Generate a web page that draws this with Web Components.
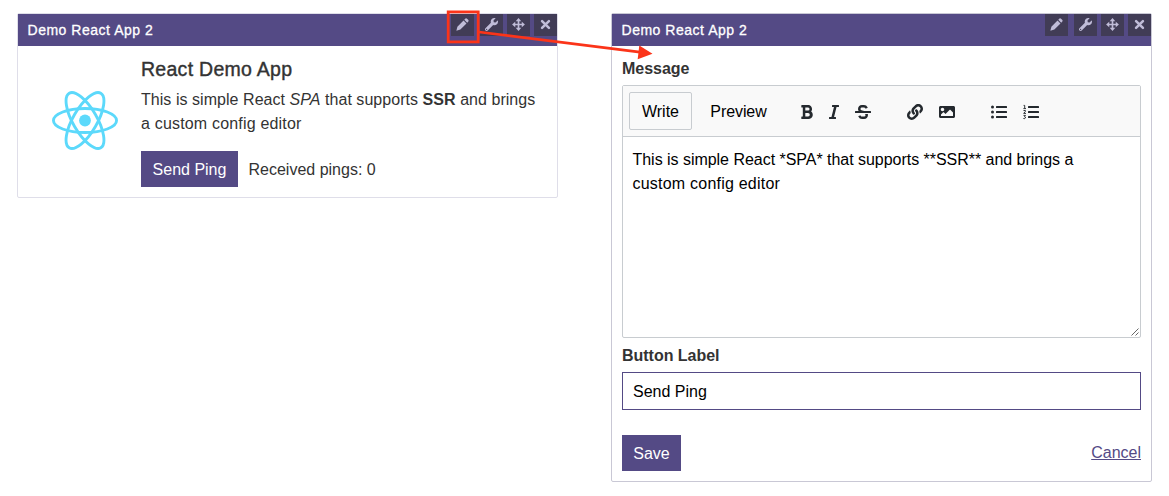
<!DOCTYPE html>
<html lang="en">
<head>
<meta charset="utf-8">
<title>Demo React App 2</title>
<style>
html,body{margin:0;background:#fff}
body{width:1169px;height:496px;overflow:hidden;font:16px/24px "Liberation Sans",Arial,sans-serif;color:#333}
</style>
</head>
<body>
<demo-page></demo-page>
<script>
const define = (name, html) => customElements.define(name, class extends HTMLElement {
  constructor() {
    super();
    this.attachShadow({mode: 'open'}).innerHTML = html;
  }
});

const ICONS = {
  pencil: ['0 0 14 14', '<path d="M.4 13.6 1.5 9.3 8.1 2.7 11.3 5.9 4.7 12.5ZM8.9 1.9 10.2.6Q11 0 11.9.7L13.3 2.1Q14 2.9 13.3 3.8L12.1 5.1Z"/>'],
  wrench: ['0 0 512 512', '<path d="M507.73 109.1c-2.24-9.03-13.54-12.09-20.12-5.51l-74.36 74.36-67.88-11.31-11.31-67.88 74.36-74.36c6.62-6.62 3.43-17.9-5.66-20.16-47.38-11.74-99.55.91-136.58 37.93-39.64 39.64-50.55 97.1-34.05 147.2L18.74 402.76c-24.99 24.99-24.99 65.51 0 90.5 24.99 24.99 65.51 24.99 90.5 0l213.21-213.21c50.12 16.71 107.47 5.68 147.37-34.22 37.07-37.07 49.7-89.32 37.91-136.73zM64 472c-13.25 0-24-10.75-24-24 0-13.26 10.75-24 24-24s24 10.74 24 24c0 13.25-10.75 24-24 24z"/>'],
  move: ['0 0 14 14', '<path d="M7 .1 10 3.5H7.9V6.1H10.5V4L13.9 7 10.5 10V7.9H7.9V10.5H10L7 13.9 4 10.5H6.1V7.9H3.5V10L.1 7 3.5 4V6.1H6.1V3.5H4Z"/>'],
  close: ['0 0 14 14', '<path d="M3.3 3.3 10.7 10.7M10.7 3.3 3.3 10.7" fill="none" stroke="currentColor" stroke-width="2.7" stroke-linecap="round"/>'],
  bold: ['16 0 368 512', '<path d="M333.49 238a122 122 0 0 0 27-65.21C367.87 96.49 308 32 233.42 32H34a16 16 0 0 0-16 16v48a16 16 0 0 0 16 16h31.87v288H34a16 16 0 0 0-16 16v48a16 16 0 0 0 16 16h209.32c70.8 0 134.14-51.75 141-122.4 4.74-48.45-16.39-92.06-50.83-119.6zM145.66 112h87.76a48 48 0 0 1 0 96h-87.76zm87.76 288h-87.76V288h87.76a56 56 0 0 1 0 112z"/>'],
  italic: ['0 0 320 512', '<path d="M320 48v32a16 16 0 0 1-16 16h-62.76l-80 320H208a16 16 0 0 1 16 16v32a16 16 0 0 1-16 16H16a16 16 0 0 1-16-16v-32a16 16 0 0 1 16-16h62.76l80-320H112a16 16 0 0 1-16-16V48a16 16 0 0 1 16-16h192a16 16 0 0 1 16 16z"/>'],
  strike: ['0 0 512 512', '<path d="M496 224H293.9l-87.17-26.83A43.55 43.55 0 0 1 219.55 112h66.79A49.89 49.89 0 0 1 331 139.58a16 16 0 0 0 21.46 7.15l42.94-21.47a16 16 0 0 0 7.16-21.46l-.53-1A128 128 0 0 0 287.51 32h-68a123.68 123.68 0 0 0-123 135.64c2 20.89 10.1 39.83 21.78 56.36H16a16 16 0 0 0-16 16v32a16 16 0 0 0 16 16h480a16 16 0 0 0 16-16v-32a16 16 0 0 0-16-16zm-180.24 96A43 43 0 0 1 336 356.45 43.59 43.59 0 0 1 292.45 400h-66.79A49.89 49.89 0 0 1 181 372.42a16 16 0 0 0-21.46-7.15l-42.94 21.47a16 16 0 0 0-7.16 21.46l.53 1A128 128 0 0 0 224.49 480h68a123.68 123.68 0 0 0 123-135.64 114.25 114.25 0 0 0-5.34-24.36z"/>'],
  link: ['0 0 512 512', '<path d="M326.612 185.391c59.747 59.809 58.927 155.698.36 214.59-.11.12-.24.25-.36.37l-67.2 67.2c-59.27 59.27-155.699 59.262-214.96 0-59.27-59.26-59.27-155.7 0-214.96l37.106-37.106c9.84-9.84 26.786-3.3 27.294 10.606.648 17.722 3.826 35.527 9.69 52.721 1.986 5.822.567 12.262-3.783 16.612l-13.087 13.087c-28.026 28.026-28.905 73.66-1.155 101.96 28.024 28.579 74.086 28.749 102.325.51l67.2-67.19c28.191-28.191 28.073-73.757 0-101.83-3.701-3.694-7.429-6.564-10.341-8.569a16.037 16.037 0 0 1-6.947-12.606c-.396-10.567 3.348-21.456 11.698-29.806l21.054-21.055c5.521-5.521 14.182-6.199 20.584-1.731a152.482 152.482 0 0 1 20.522 17.197zM467.547 44.449c-59.261-59.262-155.69-59.27-214.96 0l-67.2 67.2c-.12.12-.25.25-.36.37-58.566 58.892-59.387 154.781.36 214.59a152.454 152.454 0 0 0 20.521 17.196c6.402 4.468 15.064 3.789 20.584-1.731l21.054-21.055c8.35-8.35 12.094-19.239 11.698-29.806a16.037 16.037 0 0 0-6.947-12.606c-2.912-2.005-6.64-4.875-10.341-8.569-28.073-28.073-28.191-73.639 0-101.83l67.2-67.19c28.239-28.239 74.3-28.069 102.325.51 27.75 28.3 26.872 73.934-1.155 101.96l-13.087 13.087c-4.35 4.35-5.769 10.79-3.783 16.612 5.864 17.194 9.042 34.999 9.69 52.721.509 13.906 17.454 20.446 27.294 10.606l37.106-37.106c59.271-59.259 59.271-155.699.001-214.959z"/>'],
  image: ['0 0 512 512', '<path d="M464 448H48c-26.51 0-48-21.49-48-48V112c0-26.51 21.49-48 48-48h416c26.51 0 48 21.49 48 48v288c0 26.51-21.49 48-48 48zM112 120c-30.928 0-56 25.072-56 56s25.072 56 56 56 56-25.072 56-56-25.072-56-56-56zM64 384h384V272l-87.515-87.515c-4.686-4.686-12.284-4.686-16.971 0L208 320l-55.515-55.515c-4.686-4.686-12.284-4.686-16.971 0L64 336v48z"/>'],
  ul: ['0 0 16 16', '<circle cx="1.5" cy="3" r="1.5"/><circle cx="1.5" cy="8" r="1.5"/><circle cx="1.5" cy="13" r="1.5"/><rect x="5" y="2" width="11" height="2" rx=".5"/><rect x="5" y="7" width="11" height="2" rx=".5"/><rect x="5" y="12" width="11" height="2" rx=".5"/>'],
  ol: ['0 0 16 16', '<rect x="5" y="2" width="11" height="2" rx=".5"/><rect x="5" y="7" width="11" height="2" rx=".5"/><rect x="5" y="12" width="11" height="2" rx=".5"/><path d="M.6 1.4H1.7V4.4M.4 4.6H3M.5 6.5H2.4V7.4L.7 9.4H3M.5 11.4H2.5L1.5 12.7Q2.7 12.8 2.5 13.9Q2.2 14.9.4 14.5" fill="none" stroke="currentColor" stroke-width=".95"/>']
};

customElements.define('ui-icon', class extends HTMLElement {
  connectedCallback() {
    const [box, body] = ICONS[this.getAttribute('name')];
    const root = this.shadowRoot || this.attachShadow({mode: 'open'});
    root.innerHTML = `<style>:host{display:block;width:16px;height:16px;flex:none}svg{display:block;width:100%;height:100%;fill:currentColor}</style><svg viewBox="${box}">${body}</svg>`;
  }
});

define('window-tools', `
<style>
:host{display:flex;gap:4px;height:22px}
span{width:23px;height:22px;background:#413c56;color:#c0bcd8;display:flex;justify-content:center;box-sizing:border-box;padding-top:4px}
span:first-of-type{margin-right:2px}
ui-icon{width:13px;height:13px}
</style>
<span><ui-icon name="pencil"></ui-icon></span><span><ui-icon name="wrench"></ui-icon></span><span><ui-icon name="move"></ui-icon></span><span><ui-icon name="close"></ui-icon></span>`);

define('app-panel', `
<style>
:host{display:block;box-sizing:border-box;width:541px;border:1px solid var(--edge,#dfdee9);border-radius:2px;background:#fff}
header{height:32px;background:#544a85;color:#fff;display:flex;justify-content:space-between;font-size:14px;line-height:32px;padding-left:9.5px}
.t{letter-spacing:.52px;-webkit-text-stroke:.3px #fff}
</style>
<header><span class="t"><slot name="title"></slot></span><window-tools></window-tools></header><slot></slot>`);

define('ui-button', `
<style>:host{display:block;box-sizing:border-box;height:36px;line-height:37px;background:#544a85;color:#fff;text-align:center}</style><slot></slot>`);

define('react-logo', `
<style>:host{display:block;width:66px;height:59px}svg{display:block;width:100%;height:100%}</style>
<svg viewBox="-11.5 -10.23 23 20.46"><circle r="2.05" fill="#5cd9fb"/><g fill="none" stroke="#5cd9fb"><ellipse rx="11" ry="4.2"/><ellipse rx="11" ry="4.2" transform="rotate(60)"/><ellipse rx="11" ry="4.2" transform="rotate(120)"/></g></svg>`);

define('ping-card', `
<style>
:host{display:flex;height:151px;box-sizing:border-box}
react-logo{margin:45.3px 23.5px 0 33.5px;flex:none}
.b{padding-top:10px}
h2{margin:0;font-size:19.5px;font-weight:400;line-height:26px;letter-spacing:.28px;-webkit-text-stroke:.4px #333}
p{margin:6px 0 0;white-space:nowrap;letter-spacing:.045px}
.w{letter-spacing:.18px}
.r{display:flex;align-items:center;margin-top:15px;line-height:25px}
.r span{padding-top:1px}
ui-button{width:97px;margin-right:10.5px}
</style>
<react-logo></react-logo>
<div class="b"><h2>React Demo App</h2>
<p>This is simple React <em>SPA</em> that supports <strong>SSR</strong> and brings<br><span class="w">a custom config editor</span></p>
<div class="r"><ui-button>Send Ping</ui-button><span>Received pings: 0</span></div></div>`);

define('markdown-editor', `
<style>
:host{display:block;box-sizing:border-box;height:253px;border:1px solid #c8ccd0;border-radius:2px;color:#000;position:relative}
.bar{height:50px;background:#f9f9f9;border-bottom:1px solid #c8ccd0;display:flex;align-items:center;padding-left:6px}
.tab{box-sizing:border-box;height:38px;line-height:37px;width:63px;text-align:center;border:1px solid #c8ccd0;border-radius:2px}
.tab.off{border-color:transparent;width:81px;margin:0 22px 0 6px;letter-spacing:-.08px}
.g{display:flex;gap:16px;margin:1px 36px 0 0;color:#24292e}
.g ui-icon.n{width:12px}.g ui-icon.i{width:10px}
.text{padding:11px 9.5px;letter-spacing:-.03px}
svg{position:absolute;right:1px;bottom:1px}
</style>
<div class="bar"><div class="tab">Write</div><div class="tab off">Preview</div>
<div class="g"><ui-icon class="n" name="bold"></ui-icon><ui-icon class="i" name="italic"></ui-icon><ui-icon name="strike"></ui-icon></div>
<div class="g"><ui-icon name="link"></ui-icon><ui-icon name="image"></ui-icon></div>
<div class="g"><ui-icon name="ul"></ui-icon><ui-icon name="ol"></ui-icon></div></div>
<div class="text"><slot></slot></div>
<svg width="8" height="8" viewBox="0 0 8 8" stroke="#555" stroke-width=".9"><path d="M.5 7.5 7.5.5M4.5 7.5 7.5 4.5"/></svg>`);

define('config-form', `
<style>
:host{display:block;height:435px;box-sizing:border-box;padding:11px 10px 10px}
label{display:block;font-weight:700;line-height:24px;letter-spacing:-.02px}
markdown-editor{margin-top:4px}
.w{letter-spacing:.22px}
.l2{margin-top:6px}
.in{box-sizing:border-box;height:38px;border:1px solid #544a85;margin-top:4px;padding-left:10px;line-height:37px;color:#000}
footer{display:flex;justify-content:space-between;margin-top:25px}
ui-button{width:59px}
a{color:#544a85;text-decoration:underline;line-height:36px}
</style>
<label>Message</label>
<markdown-editor>This is simple React *SPA* that supports **SSR** and brings a<br><span class="w">custom config editor</span></markdown-editor>
<label class="l2">Button Label</label>
<div class="in">Send Ping</div>
<footer><ui-button>Save</ui-button><a>Cancel</a></footer>`);

define('callout-arrow', `
<style>:host{position:absolute;left:0;top:0;pointer-events:none}svg{display:block}</style>
<svg width="660" height="70" viewBox="0 0 660 70"><rect x="448.2" y="11.9" width="30" height="30" fill="none" stroke="#fb3419" stroke-width="2.8"/><path d="M479 32 640 52.2" stroke="#fb3419" stroke-width="2.7"/><path d="M639.3 45.5 652.5 53.8 637.7 59.2Z" fill="#fb3419"/></svg>`);

define('demo-page', `
<style>
:host{display:flex;align-items:flex-start;gap:53px;box-sizing:border-box;height:496px;padding:13px 17px;position:relative}
.e{--edge:#c9c8d5}
</style>
<app-panel><span slot="title">Demo React App 2</span><ping-card></ping-card></app-panel>
<app-panel class="e"><span slot="title">Demo React App 2</span><config-form></config-form></app-panel>
<callout-arrow></callout-arrow>`);
</script>
</body>
</html>
